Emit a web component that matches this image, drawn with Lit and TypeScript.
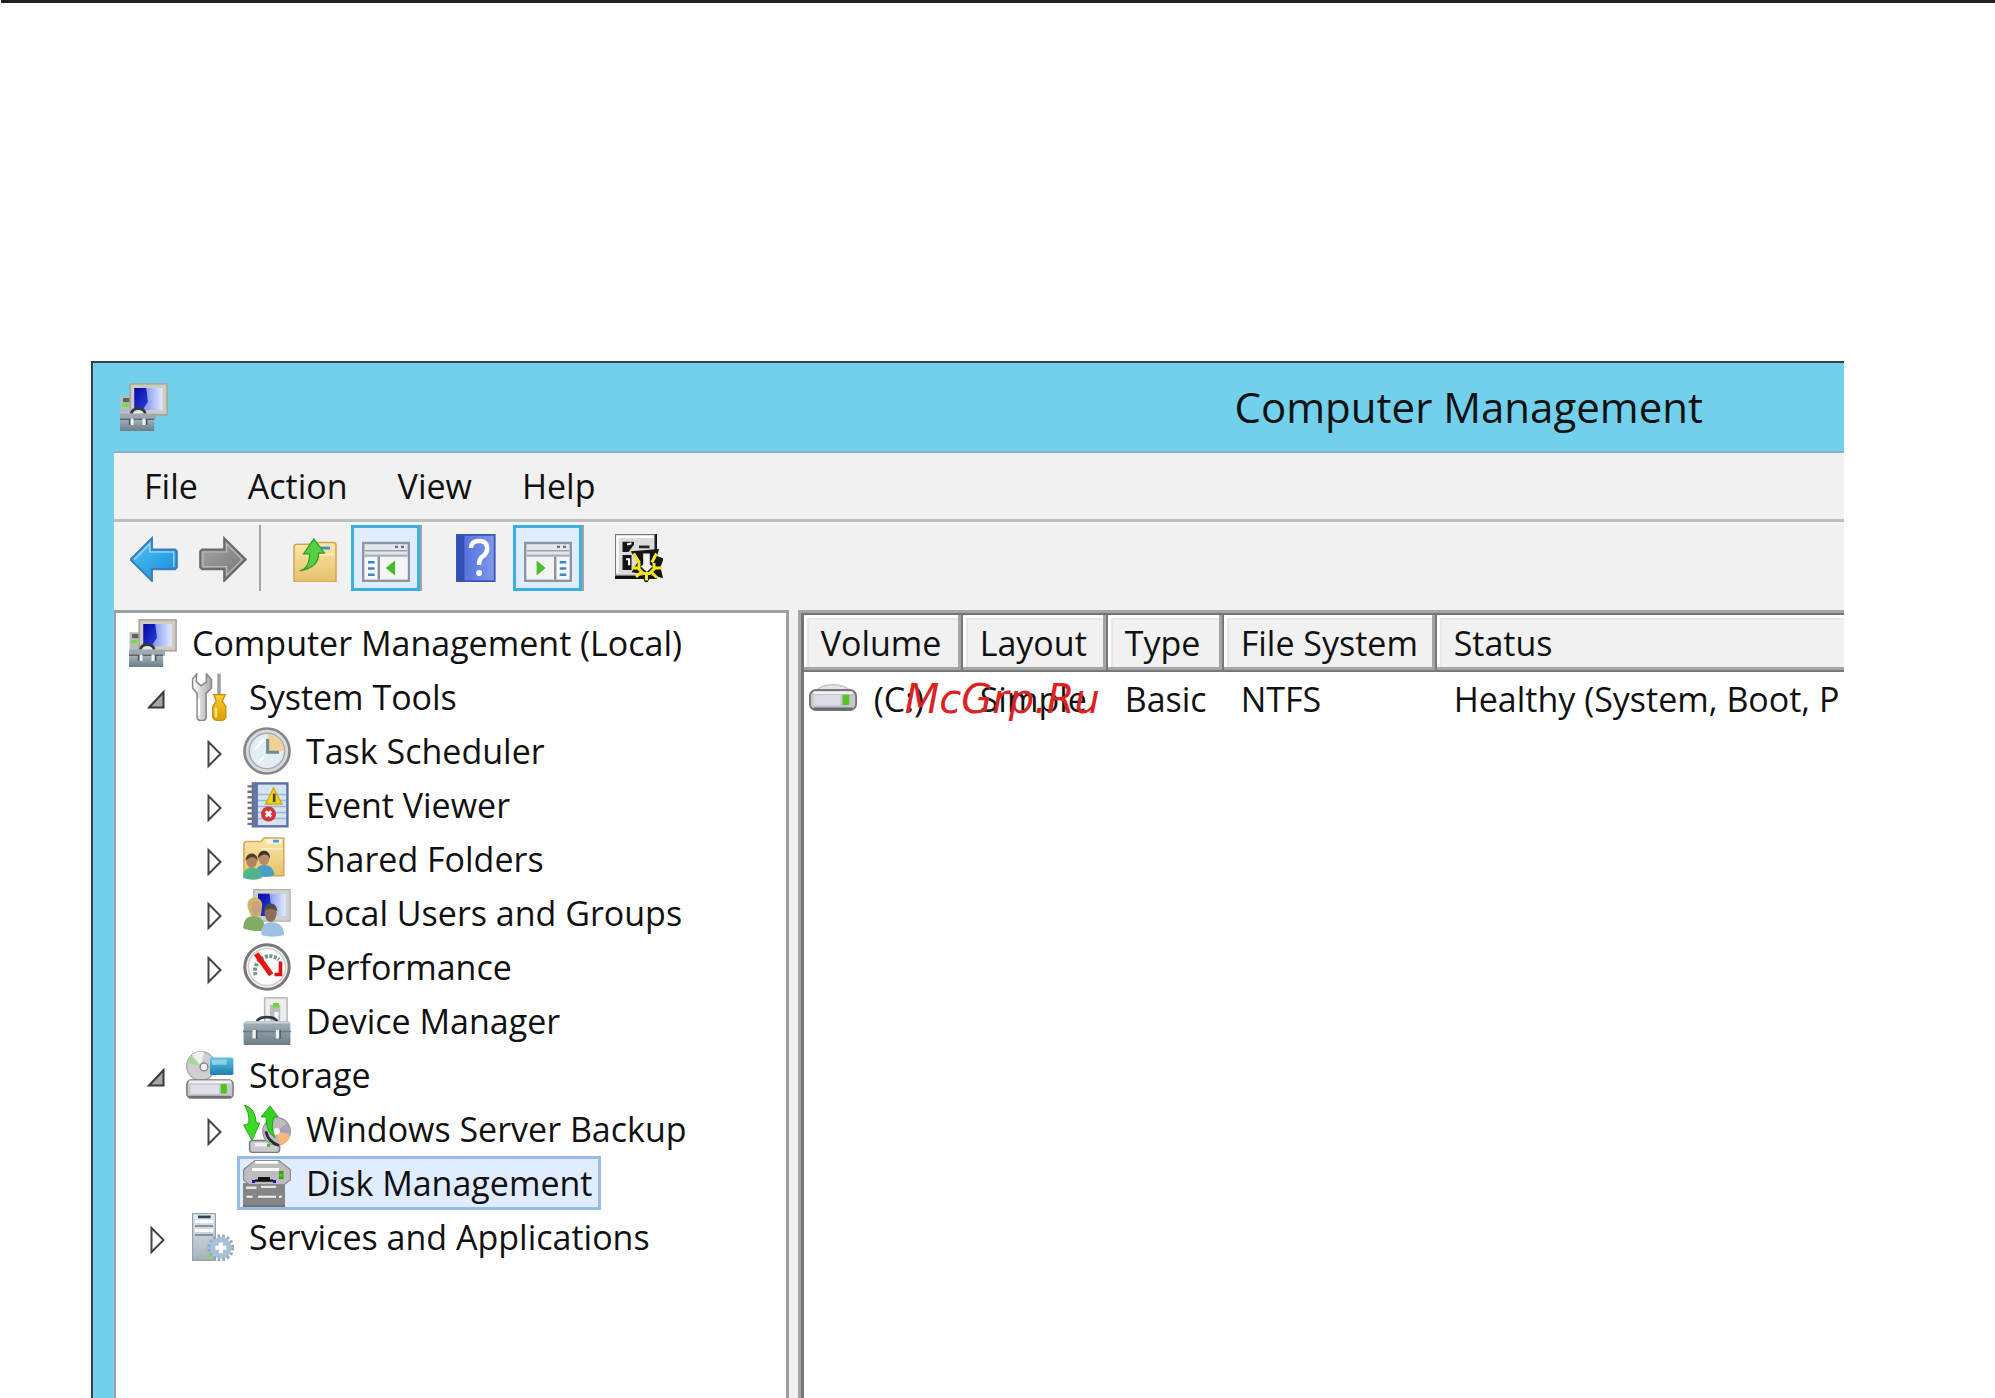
import { LitElement, html, css, svg, nothing } from "lit";
import type { TemplateResult } from "lit";
import { customElement, property, state } from "lit/decorators.js";
import { classMap } from "lit/directives/class-map.js";

type IconName =
  | "computer" | "tools" | "clock" | "events" | "shared" | "users" | "gauge" | "device"
  | "storage" | "backup" | "disk" | "services" | "drive"
  | "back" | "forward" | "up" | "paneLeft" | "paneRight" | "help" | "settings";

const gradient = (id: string, from: string, to: string, x2 = 0, y2 = 1) => svg`
  <linearGradient id=${id} x1="0" y1="0" x2=${x2} y2=${y2}>
    <stop offset="0" stop-color=${from}></stop><stop offset="1" stop-color=${to}></stop>
  </linearGradient>`;

const screen = (x: number, y: number, w: number, h: number) => svg`
  <rect x=${x} y=${y} width=${w} height=${h} fill="url(#screen)"></rect>
  <path d="M${x} ${y}h${w * 0.42}l${w * 0.06} ${h * 0.62}l${-w * 0.2} ${h * 0.38}h${-w * 0.28}z" fill="url(#deep)"></path>`;

const windowPane = () => svg`
  <rect x=".4" y="2" width="15.2" height="12.6" fill="#e4e6ee" stroke="#8f959f" stroke-width=".8"></rect>
  <path d="M1 4.6h14" stroke="#9aa0aa" stroke-width=".5"></path>
  <path d="M1 6.2h14" stroke="#a9b0ba" stroke-width=".8"></path>
  <path d="M11 3.3h1M13 3.3h1" stroke="#6c7482" stroke-width=".8"></path>`;

const person = (x: number, y: number, hair: string, skin: string, body: string) => svg`
  <path d="M${x - 2.8} ${y + 5.6}c0-2.6 1.2-3.4 2.8-3.4s3.4 .9 3.4 3.4q-3 1.2-6.2 0z" fill=${body}></path>
  <ellipse cx=${x} cy=${y} rx="1.8" ry="2.3" fill=${skin}></ellipse>
  <path d="M${x - 2} ${y}c-.2-3.4 4.2-3.4 4 0q-.6-1.3-1.8-1.3t-2.2 1.3z" fill=${hair}></path>`;

const ART: Record<IconName, () => TemplateResult> = {
  computer: () => svg`
    <rect x=".2" y="4.4" width="4" height="6.6" fill="#b9bcbb"></rect>
    <rect x="1" y="5" width="2.2" height="1.4" fill="#5c6462"></rect>
    <rect x=".8" y="7" width="2" height="1" fill="#6fe03a"></rect>
    <rect x="3.4" y=".3" width="12.3" height="10.3" fill="#cfcbc0" stroke="#a5a298" stroke-width=".5"></rect>
    ${screen(4.8, 1.7, 9.4, 7.4)}
    <path d="M3.8 10.2c.4-2.200 4.200-2.200 4.600 0" fill="#dfe6ea" stroke="#33383c" stroke-width=".9"></path>
    <rect x="0" y="10.2" width="12" height="2" fill="#9aa9b2"></rect>
    <rect x="0" y="12" width="11.400" height="4" fill="url(#steel)"></rect>
    <path d="M0 12.1h11.400" stroke="#59666f" stroke-width=".5"></path>
    <path d="M4 11.8v2.2M8 11.8v2.2" stroke="#f2f2ee" stroke-width="1"></path>
    <path d="M3.2 12v2M8.9 12v2" stroke="#4c555c" stroke-width=".5"></path>`,
  tools: () => svg`
    <path d="M3.6 .3L2.2 2v3l1.5 1.8v8.2q.2 .9 1.5 .9t1.5-.9V6.800L8.500 5V2.200L6.800.300V3L5 4.300 3.400 2.800z"
      fill="url(#chrome)" stroke="#85858a" stroke-width=".5"></path>
    <path d="M4.300 8.500v5.600" stroke="#fff" stroke-width=".7"></path>
    <rect x="10.400" y=".2" width="1.200" height="7" fill="#a0a0a2"></rect>
    <path d="M9.200 7.200h3.900l-1 2.200 1.200 1.800v3.600q-.4 1.100-2.200 1.100T8.900 14.800v-3.600l1.200-1.800z" fill="url(#gold)" stroke="#c58b08" stroke-width=".4"></path>
    <path d="M10 11.600v3.200" stroke="#ffe88a" stroke-width=".8"></path>`,
  clock: () => svg`
    <circle cx="8" cy="8" r="7.500" fill="#d9dadb" stroke="#85888a" stroke-width=".9"></circle>
    <circle cx="8" cy="8" r="5.900" fill="#e2edf4" stroke="#a6adb1" stroke-width=".5"></circle>
    <path d="M8.200 8V2.300a5.700 5.700 0 0 1 5.500 5.700z" fill="#f0d195"></path>
    <path d="M8.200 4v4.400h3.800" fill="none" stroke="#758795" stroke-width="1"></path>
    <path d="M4 7.500l3-3.500M5 12l2-2" stroke="#fff" stroke-width=".8"></path>`,
  events: () => svg`
    <rect x="3.300" y=".8" width="11.500" height="14.300" fill="#d6e4f2" stroke="#5d6fa8" stroke-width=".8"></rect>
    <rect x="3.300" y=".8" width="1.700" height="14.300" fill="#6477ab"></rect>
    <path d="M5 4.500h9.400M5 6.500h9.400M5 8.500h9.400M5 10.500h9.400M5 12.500h9.400" stroke="#9db7d3" stroke-width=".5"></path>
    <path d="M1.500 1.800h2.300M1.500 3.600h2.300M1.500 5.400h2.300M1.500 7.200h2.300M1.500 9h2.300M1.500 10.800h2.300M1.500 12.600h2.300M1.500 14.300h2.300" stroke="#737373" stroke-width=".8"></path>
    <path d="M10.200 2.300L13 7.700H7.500z" fill="#f0d31c" stroke="#c9a80e" stroke-width=".4"></path>
    <path d="M10.400 4.200v2.800" stroke="#4c4520" stroke-width=".9"></path>
    <circle cx="8.500" cy="11" r="2.500" fill="#d6323c"></circle>
    <path d="M7.600 10.100l1.800 1.800M9.400 10.100l-1.800 1.800" stroke="#fff" stroke-width=".9"></path>`,
  shared: () => svg`
    <path d="M.3 3.200q0-1 1-1h4.700l1-1.200h6.600v12.600H.3z" fill="url(#folder)" stroke="#d0a95a" stroke-width=".5"></path>
    <rect x="7.800" y="1.400" width="5" height="1.500" fill="#f8f5e8"></rect>
    <rect x="10" y="1.600" width="2" height=".9" fill="#4a9ae8"></rect>
    <path d="M6 4.600h7.300" stroke="#fdf0c0" stroke-width=".6"></path>
    ${person(7, 7.800, "#3a3532", "#b98f68", "#4b9fc4")}
    ${person(2.900, 8.700, "#4b3f34", "#b18460", "#4fb58c")}`,
  users: () => svg`
    <rect x="3.600" y=".2" width="12.100" height="10.500" fill="#d0d0cd" stroke="#b0b0ad" stroke-width=".4"></rect>
    ${screen(5, 1.600, 9.200, 7.400)}
    <path d="M.1 13.200c0-3 1.200-4.200 3.600-4.200s3.600 1.600 3.600 4.800q-4 .6-7.200-.6z" fill="#7fae62"></path>
    <path d="M1.500 6c-.5-4 4.800-4.200 4.900-.5l-.5 3.500H2.600z" fill="#cdb765"></path>
    <ellipse cx="4.300" cy="6.400" rx="1.600" ry="2.300" fill="#cf9f7b"></ellipse>
    <path d="M6.100 15.300c0-3.200 1.200-4.300 3.400-4.300s4.200 1.300 4.200 4.300q-4 1.200-7.600 0z" fill="#9dc0e4"></path>
    <ellipse cx="9.200" cy="8" rx="2" ry="2.900" fill="#8e6c58"></ellipse>
    <path d="M7 7.400c0-3.400 4.400-3.400 4.400 0q-2-1.800-4.400 0z" fill="#4f4d4c"></path>`,
  gauge: () => svg`
    <circle cx="8" cy="8" r="7.400" fill="#f4f3f2" stroke="#77797b" stroke-width="1"></circle>
    <circle cx="8" cy="8" r="6.200" fill="#fdfcfb" stroke="#d4cfcb" stroke-width=".5"></circle>
    <path d="M4.200 10.700A4.900 4.900 0 0 1 12 5.500" fill="none" stroke="#74958a" stroke-width="1.300" stroke-dasharray="1 .5"></path>
    <path d="M4.400 3.600l5 7" stroke="#ee1212" stroke-width="1.800"></path>
    <path d="M12.500 6.200v4.300h-2" fill="none" stroke="#e01010" stroke-width="1.200"></path>`,
  device: () => svg`
    <rect x="7.200" y=".3" width="7.500" height="9" fill="#eceeee" stroke="#b5b8ba" stroke-width=".5"></rect>
    <rect x="9" y="2.600" width="3.400" height="6" fill="#b8bfc0"></rect>
    <rect x="10" y="2" width="2" height="1.500" fill="#78d337"></rect>
    <rect x="10.500" y="5" width="1.300" height="4" fill="#fff"></rect>
    <path d="M4.600 8.200c.8-2 6-2 6.800 0" fill="none" stroke="#33383c" stroke-width=".9"></path>
    <path d="M.2 16V8.900l.6-.8h14.400l.6 .8V16z" fill="url(#steel)"></path>
    <path d="M.8 8.500h14.400" stroke="#c8d2d8" stroke-width=".7"></path>
    <path d="M0 11.500h16" stroke="#6b7880" stroke-width=".5"></path>
    <path d="M3.700 11v2.800M11.500 11v2.800" stroke="#f4efe6" stroke-width="1.100"></path>
    <path d="M4.600 11v3M12.400 11v3" stroke="#56606a" stroke-width=".5"></path>`,
  storage: () => svg`
    <circle cx="5" cy="5" r="4.800" fill="#cfcfd1" stroke="#a5a5a8" stroke-width=".4"></circle>
    <path d="M5 5L2 1.200A4.800 4.800 0 0 1 6 .3z" fill="#f0f0f0"></path>
    <path d="M5 5L.4 4a4.800 4.800 0 0 1 1.200-2.300z" fill="#a8d694"></path>
    <circle cx="6" cy="5.300" r="1.300" fill="#f4f4f4" stroke="#8b8b8e" stroke-width=".5"></circle>
    <rect x="8" y="2.200" width="7.800" height="5.800" rx=".5" fill="url(#teal)"></rect>
    <rect x="8.600" y="2.800" width="5" height="1.800" fill="#a5dcef" opacity=".7"></rect>
    <rect x=".3" y="9.700" width="15.400" height="6" rx="1.400" fill="#c7c7cc" stroke="#77777c" stroke-width=".5"></rect>
    <path d="M1 10.300h14" stroke="#f2f2f5" stroke-width=".9"></path>
    <rect x="1.500" y="11.300" width="9.500" height="3" fill="#dfdfea"></rect>
    <path d="M1 15.300h14" stroke="#707078" stroke-width=".7"></path>
    <rect x="11.600" y="11" width="2" height="3.200" fill="#52c41d"></rect>`,
  backup: () => svg`
    <rect x="2.200" y="11.800" width="10" height="4" rx="1" fill="#cacace" stroke="#7a7a80" stroke-width=".5"></rect>
    <path d="M4 13.200h4" stroke="#f0f0f6" stroke-width="1.200"></path>
    <circle cx="11.200" cy="8.800" r="4.600" fill="#bcbcc0" stroke="#96969a" stroke-width=".4"></circle>
    <path d="M11.200 8.800l3.600-2.900a4.600 4.600 0 0 1 1 3.600z" fill="#a9a0b2"></path>
    <path d="M11.200 8.800l4.500 1.500a4.600 4.600 0 0 1-3.500 3z" fill="#ffb678"></path>
    <path d="M7.600 8.800q.8 3.600 4.400 4.700" fill="none" stroke="#2a2a2a" stroke-width=".9"></path>
    <circle cx="11.200" cy="8.800" r="1.100" fill="#f3f3f3"></circle>
    <path d="M.4 0q3.800 1 4 6h1.200L3 11.800 .2 6.700l1.700-.5Q2.300 2.600.4 0z" fill="#3ddb25" stroke="#249c14" stroke-width=".3"></path>
    <path d="M6 4L9 .3l2.700 3.600H10.400q-1.400 3.500 .3 7Q7.500 9 7.700 4z" fill="#35d321" stroke="#249c14" stroke-width=".3"></path>
    <rect x="8" y="13" width="1" height="1" fill="#3fc41f"></rect>`,
  disk: () => svg`
    <path d="M0 8h14v8H0z" fill="#858585"></path>
    <path d="M.2 3.500L4 .5h8l3.800 3v3.500l-2 1.500H2L.2 7z" fill="#bdbdbd" stroke="#8a8a8a" stroke-width=".4"></path>
    <path d="M4 1.100h7.600" stroke="#fff" stroke-width=".9"></path>
    <path d="M3 3.500h9" stroke="#fafafa" stroke-width="1"></path>
    <path d="M5 6.400h4M4 7.200h6" stroke="#111" stroke-width=".8"></path>
    <path d="M3 7.500h1M10 7.500h1" stroke="#1414aa" stroke-width="1"></path>
    <rect x="12" y="4" width="1.500" height="2.700" fill="#5a8a1a"></rect>
    <rect x="12.200" y="4.900" width="1" height="1" fill="#18f018"></rect>
    <path d="M1 9.600h3.500M6 9.300h5" stroke="#e4e4e4" stroke-width=".8"></path>
    <path d="M1.200 12.600h2M5 12.600h6M12 12.600h1" stroke="#f2f2f2" stroke-width=".7"></path>
    <path d="M0 15.700h14" stroke="#6f6f6f" stroke-width=".6"></path>`,
  services: () => svg`
    <rect x="2.200" y=".2" width="7.600" height="15.600" fill="url(#tower)" stroke="#97a3ab" stroke-width=".4"></rect>
    <path d="M4 1.300h4.200" stroke="#2b4654" stroke-width=".9"></path>
    <path d="M3 4.300h6M3 7.300h6" stroke="#6f7c85" stroke-width=".5"></path>
    <path d="M3 2.800h6M3 5.800h6" stroke="#fff" stroke-width="1"></path>
    <circle cx="11.600" cy="11.600" r="3.600" fill="#a9c0d6"></circle>
    <circle cx="11.600" cy="11.600" r="4" fill="none" stroke="#8ea9c2" stroke-width="1" stroke-dasharray=".9 .7"></circle>
    <path d="M11.600 9.800v3.600M9.800 11.600h3.600" stroke="#fff" stroke-width="1.300"></path>
    <rect x="7" y="14" width="1.700" height="1" fill="#87dc55"></rect>`,
  drive: () => svg`
    <path d="M2 5.500q2-2.300 6-2.300t6 2.300z" fill="#e4e4e3" stroke="#c3c3c3" stroke-width=".4"></path>
    <rect x=".3" y="5" width="15.400" height="6.700" rx="2" fill="#c4c4c9" stroke="#74747a" stroke-width=".6"></rect>
    <path d="M1.500 5.900h13" stroke="#f4f4f4" stroke-width=".8"></path>
    <rect x="1.500" y="6.700" width="9" height="3.400" fill="#dcdce8"></rect>
    <path d="M1.500 11.200h13" stroke="#66666c" stroke-width=".7"></path>
    <rect x="11.200" y="6.600" width="2.200" height="3.400" fill="#58c420"></rect>`,
  back: () => svg`
    <path d="M.2 8.500L7.300 1.400V5.200H15l.6 .6v5.300l-.6 .6H7.300v3.900z" fill="url(#blueArrow)" stroke="#3a7fb8" stroke-width=".7"></path>
    <path d="M1.400 8.500l5.200-5.200V6h8v5" fill="none" stroke="#8fd6fb" stroke-width=".5"></path>`,
  forward: () => svg`
    <path d="M15.600 8.500L8.400 1.400V5.200H1l-.6 .6v5.300l.6 .6h7.400v3.900z" fill="url(#grayArrow)" stroke="#6c6c6c" stroke-width=".7"></path>
    <path d="M14.400 8.500L9.200 3.300V6H1.300v4.900h7.900v2.800z" fill="none" stroke="#b9b9b9" stroke-width=".4"></path>`,
  up: () => svg`
    <path d="M1 4.400q0-1 1-1h5l1-.6h6q1 0 1 .9V16H1z" fill="url(#folder)" stroke="#cda654" stroke-width=".5"></path>
    <rect x="9.500" y="4.200" width="3.500" height="1" fill="#3b94d8"></rect>
    <path d="M6.500 6.800h8" stroke="#fff0bd" stroke-width=".6"></path>
    <path d="M2.900 12.300Q6.200 11.500 6.200 6.600H4.200L7.600 1.600l3.600 4.800H9.200Q9.400 11 2.900 12.300z" fill="#55d043" stroke="#2f9d26" stroke-width=".4"></path>`,
  paneLeft: () => svg`<g transform="translate(0 1)">${windowPane()}
    <rect x=".9" y="6.700" width="4.300" height="7.400" fill="#f6f8fc"></rect>
    <rect x="6" y="6.700" width="9.200" height="7.400" fill="#f5f5f3"></rect>
    <path d="M5.600 6.600v7.600" stroke="#8f959f" stroke-width=".8"></path>
    <path d="M2 8.400h2.200M2 10.500h2.200M2 12.600h2.200" stroke="#3f83c8" stroke-width=".8"></path>
    <path d="M11 7.800v5L7.900 10.300z" fill="#46bb2b"></path></g>`,
  paneRight: () => svg`<g transform="translate(0 1)">${windowPane()}
    <rect x=".9" y="6.700" width="9.200" height="7.400" fill="#f5f5f3"></rect>
    <rect x="10.800" y="6.700" width="4.300" height="7.400" fill="#f6f8fc"></rect>
    <path d="M10.400 6.600v7.600" stroke="#8f959f" stroke-width=".8"></path>
    <path d="M11.900 8.400h2.200M11.900 10.500h2.200M11.900 12.600h2.200" stroke="#3f83c8" stroke-width=".8"></path>
    <path d="M4.200 7.800v5L7.200 10.300z" fill="#46bb2b"></path></g>`,
  help: () => svg`
    <rect x="1.300" y=".3" width="12.600" height="15.400" fill="url(#book)" stroke="#3b57b0" stroke-width=".6"></rect>
    <rect x="1.300" y=".3" width="2.500" height="15.400" fill="#3150b4"></rect>
    <path d="M6 4.700Q6 2.300 8.700 2.300t2.700 2.500Q11.400 6.500 9.700 7.600q-1 .8-1 2.700" fill="none" stroke="#fff" stroke-width="1.500"></path>
    <circle cx="8.700" cy="13" r="1" fill="#fff"></circle>`,
  settings: () => svg`
    <rect x="0" y="0" width="14" height="15" fill="#111"></rect>
    <rect x=".2" y=".2" width="13" height="13.600" fill="#dcdcdc" stroke="#777" stroke-width=".4"></rect>
    <path d="M.8 13.200V.9h12" fill="none" stroke="#fff" stroke-width=".8"></path>
    <path d="M2.500 2.600h3.800v1L4.500 6H2.500zM2.500 7h3v5h-3z" fill="#141414"></path>
    <path d="M4 3.500l1.500-.4M3.700 8.400h1v2" stroke="#fff" stroke-width=".7" fill="none"></path>
    <path d="M8 4.300h3.500" stroke="#222" stroke-width=".9"></path>
    <path d="M6.300 6.300l2 3-1.800 3 3 .4.9 3 1.400-2.800 3.400 1-.7-3 1-2.400-2.200-.8.6-2z" fill="#161616" stroke="#161616" stroke-width="1.200"></path>
    <path d="M6.200 6.500l2 3.200M13.800 6.500l-1.500 3M8 9.700v2l1.500 1.500h2l1.500-1.500v-2M5.700 11.300H8M13 11.300h2.700M7 14.300l2-1.800M10.500 13v2.500M12 12.600l2 2" fill="none" stroke="#f3e71a" stroke-width="1"></path>
    <path d="M9.400 6.500h2.200v3.700l.9 .6-1.900 1.900-2-1.900 .8-.6z" fill="#f3f3f3"></path>`,
};

@customElement("mmc-icon")
class MmcIcon extends LitElement {
  @property() name: IconName = "computer";

  static styles = css`
    :host { display: block; flex: none; width: 48px; height: 48px; }
    .art { display: block; width: 100%; height: 100%; }
  `;

  render() {
    return html`<svg class="art" viewBox="0 0 16 16" aria-hidden="true">
      <defs>
        ${gradient("screen", "#4a66ea", "#e2eaff", 1, 0)}
        ${gradient("deep", "#0608a8", "#2a45d8", 1, 1)}
        ${gradient("steel", "#a3b3bd", "#6c7d88")}
        ${gradient("chrome", "#fdfdfd", "#a9a9ad", 1, 0)}
        ${gradient("gold", "#f9cf31", "#e09b06")}
        ${gradient("folder", "#fbe7a8", "#e6c06c")}
        ${gradient("teal", "#5cc0e2", "#1c7fae")}
        ${gradient("tower", "#e4ecf0", "#a5b2ba")}
        ${gradient("blueArrow", "#58c5fa", "#128ad8", 1, 1)}
        ${gradient("grayArrow", "#a8a8a8", "#747474", 1, 1)}
        ${gradient("book", "#4b6cdc", "#7f98ea", 1, 0)}
      </defs>
      ${ART[this.name]()}
    </svg>`;
  }
}

interface TreeNode {
  label: string;
  icon: IconName;
  level: number;
  open?: boolean;
}

const NODES: TreeNode[] = [
  { label: "Computer Management (Local)", icon: "computer", level: 0 },
  { label: "System Tools", icon: "tools", level: 1, open: true },
  { label: "Task Scheduler", icon: "clock", level: 2, open: false },
  { label: "Event Viewer", icon: "events", level: 2, open: false },
  { label: "Shared Folders", icon: "shared", level: 2, open: false },
  { label: "Local Users and Groups", icon: "users", level: 2, open: false },
  { label: "Performance", icon: "gauge", level: 2, open: false },
  { label: "Device Manager", icon: "device", level: 2 },
  { label: "Storage", icon: "storage", level: 1, open: true },
  { label: "Windows Server Backup", icon: "backup", level: 2, open: false },
  { label: "Disk Management", icon: "disk", level: 2 },
  { label: "Services and Applications", icon: "services", level: 1, open: false },
];

@customElement("mmc-tree")
class MmcTree extends LitElement {
  @state() private selected = "Disk Management";

  static styles = css`
    :host {
      display: block; flex: none; width: 39%; min-width: 0; box-sizing: border-box;
      padding: 3px 0 0 7px; overflow: hidden;
      background: #fff; border: solid #9a9fa8; border-width: 3px 3px 0 2px;
    }
    .nodes { list-style: none; margin: 0; padding: 0; }
    .node { display: flex; height: 54px; }
    .level-2 { padding-left: 57px; }
    .toggle, .gap { box-sizing: border-box; flex: none; width: 57px; }
    .toggle { padding: 0 0 0 24px; border: 0; background: none; }
    .arrow { display: block; width: 18px; height: 30px; margin-top: 6px; }
    .item {
      display: flex; align-items: center; gap: 15px; padding: 0 6px 0 3px;
      border: 3px solid transparent; background: none; box-sizing: border-box;
      font: inherit; color: inherit; white-space: nowrap;
    }
    .selected { background: #e0ecff; border-color: #98bbea; }
  `;

  private arrow(open: boolean) {
    return html`<svg class="arrow" viewBox="0 0 18 30" aria-hidden="true">
      ${open
        ? svg`<path d="M2 22.500L16.500 7v15.500z" fill="#a6a6a6" stroke="#3a3a3a" stroke-width="2"></path>`
        : svg`<path d="M4.500 3v24L16.500 15z" fill="#fff" stroke="#444" stroke-width="2"></path>`}
    </svg>`;
  }

  render() {
    return html`<ul class="nodes">
      ${NODES.map((node) => html`
        <li class=${classMap({ node: true, [`level-${node.level}`]: true })}>
          ${node.level === 0 ? nothing : node.open === undefined
            ? html`<span class="gap"></span>`
            : html`<button class="toggle" aria-label=${node.label} aria-expanded=${String(node.open)}>${this.arrow(node.open)}</button>`}
          <button
            class=${classMap({ item: true, selected: node.label === this.selected })}
            @click=${() => (this.selected = node.label)}
          ><mmc-icon .name=${node.icon}></mmc-icon>${node.label}</button>
        </li>`)}
    </ul>`;
  }
}

@customElement("mmc-volumes")
class MmcVolumes extends LitElement {
  static styles = css`
    :host {
      display: flex; flex: 1; min-width: 0; overflow: hidden;
      background: #fff; border: solid #a6a6a6; border-width: 3px 0 0 3px;
    }
    .frame { position: relative; flex: 1; min-width: 0; overflow: hidden; border: solid #747474; border-width: 2px 0 0 3px; }
    .list { width: 100%; table-layout: fixed; border-collapse: collapse; }
    .volume { width: 159px; }
    .layout { width: 145px; }
    .type { width: 116px; }
    .system { width: 213px; }
    .head, .cell {
      padding: 0 0 0 17px; font-weight: 400; text-align: left; white-space: nowrap; overflow: hidden;
    }
    .head {
      height: 57px; box-sizing: border-box; background: #f1f1f1; line-height: 57px;
      box-shadow: inset -2px -2px #777, inset -5px -5px #a6a6a6, inset 3px 3px #fff, inset 5px 5px #e8e8e8;
    }
    .last { box-shadow: inset 0 -2px #777, inset 0 -5px #a6a6a6, inset 3px 3px #fff, inset 5px 5px #e8e8e8; }
    .cell { height: 54px; line-height: 54px; }
    .first { padding-left: 5px; }
    .name { display: flex; align-items: center; gap: 17px; }
    .mark {
      position: absolute; left: 101px; top: 60px;
      font: italic 40px/48px "DejaVu Sans", sans-serif; color: #dc2323;
    }
  `;

  render() {
    return html`
      <div class="frame">
        <table class="list">
          <colgroup>
            <col class="volume"><col class="layout"><col class="type"><col class="system"><col>
          </colgroup>
          <thead>
            <tr>
              <th class="head">Volume</th><th class="head">Layout</th><th class="head">Type</th>
              <th class="head">File System</th><th class="head last">Status</th>
            </tr>
          </thead>
          <tbody>
            <tr>
              <td class="cell first"><div class="name"><mmc-icon .name=${"drive"}></mmc-icon>(C:)</div></td>
              <td class="cell">Simple</td><td class="cell">Basic</td>
              <td class="cell">NTFS</td><td class="cell">Healthy (System, Boot, P</td>
            </tr>
          </tbody>
        </table>
        <span class="mark">McGrp.Ru</span>
      </div>`;
  }
}

@customElement("app-root")
class AppRoot extends LitElement {
  static styles = css`
    :host {
      display: flex; flex-direction: column; height: 100vh; overflow: hidden; background: #fff;
      font: 34px/48px "Open Sans", "Noto Sans", sans-serif; color: #111;
    }
    .rule { flex: none; height: 3px; margin-left: 1px; background: #231f20; }
    .window {
      flex: 1; min-height: 0; display: flex; flex-direction: column;
      margin: 358px 151px 0 91px; padding-left: 21px;
      background: #71d0ec; border: solid #34434b; border-width: 2px 0 0 2px;
    }
    .titlebar {
      flex: none; display: flex; align-items: center; justify-content: space-between;
      height: 88px; padding: 0 141px 0 6px;
    }
    .title { margin: 0; font-size: 42px; font-weight: 400; line-height: 56px; }
    .client {
      flex: 1; min-height: 0; display: flex; flex-direction: column;
      background: #f1f1f1; border-top: 2px solid #8fb0be;
    }
    .menu { flex: none; display: flex; align-items: center; gap: 50px; height: 66px; padding: 0 30px; border-bottom: 3px solid #bdbfc0; }
    .menu-item { padding: 0; border: 0; background: none; font: inherit; color: inherit; }
    .toolbar { flex: none; display: flex; align-items: flex-start; height: 85px; padding: 1px 5px 0; border-top: 2px solid #f1f5fa; }
    .tool {
      display: flex; align-items: center; justify-content: center; box-sizing: border-box;
      width: 72px; height: 66px; padding: 0; border: 0; background: none;
    }
    .nav { width: 69px; }
    .on { background: #e0ecff; border: 3px solid #3cb0e4; width: 69px; margin-right: 3px; box-shadow: 2px 0 #a3a3a3; }
    .bar { width: 2px; height: 66px; margin: 0 18px 0 2px; background: #a3a3a3; }
    .space { width: 18px; }
    .panes { flex: 1; min-height: 0; display: flex; gap: 9px; }
  `;

  private tool(icon: IconName, label: string, kind = "") {
    return html`<button class="tool ${kind}" aria-label=${label}><mmc-icon .name=${icon}></mmc-icon></button>`;
  }

  render() {
    return html`
      <div class="rule"></div>
      <main class="window">
        <header class="titlebar">
          <mmc-icon .name=${"computer"}></mmc-icon>
          <h1 class="title">Computer Management</h1>
        </header>
        <div class="client">
          <nav class="menu">
            ${["File", "Action", "View", "Help"].map((m) => html`<button class="menu-item">${m}</button>`)}
          </nav>
          <div class="toolbar" role="toolbar">
            ${this.tool("back", "Back", "nav")}
            ${this.tool("forward", "Forward", "nav")}
            <span class="bar"></span>
            ${this.tool("up", "Up one level")}
            ${this.tool("paneLeft", "Console tree", "on")}
            <span class="space"></span>
            ${this.tool("help", "Help")}
            ${this.tool("paneRight", "Action pane", "on")}
            <span class="space"></span>
            ${this.tool("settings", "Settings")}
          </div>
          <section class="panes">
            <mmc-tree></mmc-tree>
            <mmc-volumes></mmc-volumes>
          </section>
        </div>
      </main>`;
  }
}
